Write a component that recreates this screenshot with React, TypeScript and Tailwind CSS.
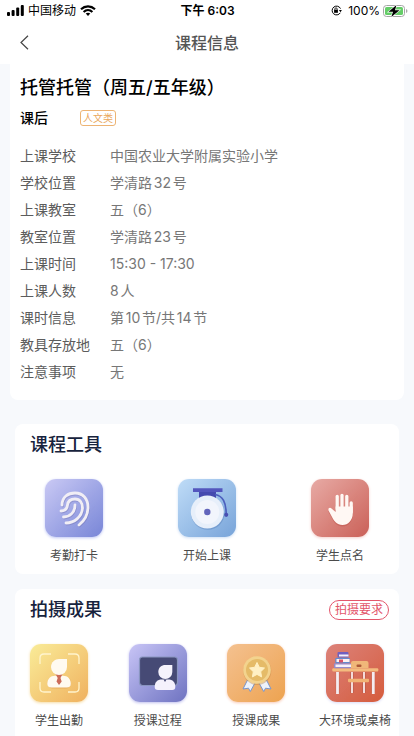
import type { ReactNode } from "react";

const details = [
  ["上课学校", "中国农业大学附属实验小学"],
  ["学校位置", "学清路32号"],
  ["上课教室", "五（6）"],
  ["教室位置", "学清路23号"],
  ["上课时间", "15:30 - 17:30"],
  ["上课人数", "8人"],
  ["课时信息", "第10节/共14节"],
  ["教具存放地", "五（6）"],
  ["注意事项", "无"],
];

function StatusBar() {
  return (
    <div className="grid h-[21px] grid-cols-[1fr_auto_1fr] items-center pr-[6px] pl-[7px] text-xs text-black">
      <div className="flex items-center gap-1">
        <svg width="17" height="11" viewBox="0 0 17 11" aria-hidden="true">
          <rect x="0" y="7" width="3" height="4" rx="1" />
          <rect x="4.6" y="5" width="3" height="6" rx="1" />
          <rect x="9.2" y="2.6" width="3" height="8.4" rx="1" />
          <rect x="13.8" y="0" width="3" height="11" rx="1" />
        </svg>
        <span>中国移动</span>
        <svg width="16" height="11" viewBox="0 0 16 11" fill="none" stroke="black" strokeWidth="2.2" aria-hidden="true">
          <path d="M1 4.2C5 .4 11 .4 15 4.2" />
          <path d="M3.6 7C6.2 4.6 9.8 4.6 12.4 7" />
          <path d="M5.7 8.6C7 7.4 9 7.4 10.3 8.6L8 11Z" fill="black" stroke="none" />
        </svg>
      </div>
      <div className="font-semibold">下午 6:03</div>
      <div className="flex items-center justify-end gap-[3px]">
        <svg className="mr-[3px]" width="11" height="11" viewBox="0 0 11 11" fill="none" stroke="black" aria-hidden="true">
          <path d="M9.3 7.8A4.4 4.4 0 1 1 9.5 3.6" strokeWidth="1" />
          <path d="M7.9 5h3L9.5 7.2Z" fill="black" stroke="none" />
          <rect x="3.1" y="4.8" width="3.8" height="3" fill="black" stroke="none" />
          <path d="M3.9 5V3.9a1.1 1.1 0 0 1 2.2 0V5" strokeWidth=".8" />
        </svg>
        <span>100%</span>
        <svg width="25" height="12" viewBox="0 0 25 12" aria-hidden="true">
          <rect x=".5" y=".5" width="21" height="11" rx="3" fill="white" stroke="#a5a5a5" />
          <rect x="2" y="2" width="18" height="8" rx="1.6" fill="#65cd68" />
          <path d="M23 4v4q1.5-.6 1.5-2T23 4Z" fill="#aaa" />
          <path d="M13.500 0 5.500 6.800H10L8.300 12 16.500 5.200H12Z" fill="none" stroke="white" strokeWidth="1.200" />
          <path d="M13.500 0 5.500 6.800H10L8.300 12 16.500 5.200H12Z" fill="black" />
        </svg>
      </div>
    </div>
  );
}

function FingerprintArt() {
  return (
    <g fill="none" strokeLinecap="round" strokeWidth="2.8">
      <g stroke="#7776b4" opacity=".45" transform="translate(.6 1)">
        <path d="M17 26C17 18 23 14 30 14C38 14 43 20 43 28C43 36 39 42 34 46" />
        <path d="M16 32C20 32 22 30 22.5 26C23 22 26 20 30 20C35 20 37.500 24 37.500 29C37 38 29 44 21 44" />
        <path d="M18.500 38C25 38 30 33 30 26" />
      </g>
      <g stroke="#f1eef5">
        <path d="M17 26C17 18 23 14 30 14C38 14 43 20 43 28C43 36 39 42 34 46" />
        <path d="M16 32C20 32 22 30 22.500 26C23 22 26 20 30 20C35 20 37.500 24 37.500 29C37 38 29 44 21 44" />
        <path d="M18.500 38C25 38 30 33 30 26" />
      </g>
    </g>
  );
}

function BellArt() {
  return (
    <>
      <path d="M21 12h17v8H21z" fill="#454aaf" />
      <path d="M15 9.300h29.500v3.600H15z" fill="#5356bd" />
      <path d="M37 15.500C45 17 48 23 48.200 35" fill="none" stroke="#4c5fbd" strokeWidth="1.700" />
      <circle cx="48.200" cy="35.800" r="2.100" fill="#484fb2" />
      <circle cx="29.800" cy="34" r="16.800" fill="#5c83bd" opacity=".45" />
      <circle cx="29.300" cy="33" r="16.500" fill="#e7effa" />
      <circle cx="29.300" cy="33" r="12" fill="#f2f5fc" />
      <circle cx="29.300" cy="33" r="3.200" fill="#6265bb" />
    </>
  );
}

function HandShape() {
  return (
    <>
      <path d="M26.200 30V17.500M31 30V16.300M35.800 30V17.500M40.200 33V24" fill="none" strokeWidth="3.300" strokeLinecap="round" />
      <path d="M24.600 27.500H41.800V34C41.800 41.500 37 46 31.500 46C26 46 23 42 21 38L17.500 31.500C16.800 29.400 18.800 27.800 20.500 29.500L24.600 33Z" stroke="none" />
    </>
  );
}

function HandArt() {
  return (
    <>
      <g fill="#b4483f" stroke="#b4483f" opacity=".35" transform="translate(0 1.500)"><HandShape /></g>
      <g fill="#fff8f4" stroke="#fff8f4"><HandShape /></g>
    </>
  );
}

function AttendanceArt() {
  return (
    <>
      <path d="M10 20V14q0-4 4-4h7M38 10h7q4 0 4 4v6M49 38v6q0 4-4 4h-7M21 48h-7q-4 0-4-4v-6" fill="none" stroke="#fff4cd" strokeWidth="1.300" />
      <rect x="17.500" y="33" width="23.500" height="11.500" rx="5.500" fill="#d99042" opacity=".45" />
      <path d="M25 31.800h8c5 0 7.800 3.500 7.800 8 0 2.500-1.300 3.700-4 3.700H21.500c-3 0-4.200-1.400-4.200-3.700 0-4.500 3-8 7.700-8Z" fill="#fffaf0" />
      <path d="M25.500 30h7l-2 4 1.200 3.500L29 41l-2.500-3.500 1.200-3.500Z" fill="#cc6b58" />
      <path d="M37 15v8a8 8 0 1 1-16 0c0-5 4-8 8-8Z" fill="#fffaf0" />
    </>
  );
}

function TeachingArt() {
  return (
    <>
      <rect x="10.500" y="13" width="38" height="28.500" rx="3" fill="#464a75" stroke="#8995c0" strokeWidth="1.200" />
      <path d="M33 35.500h6c4.800 0 7.300 2.600 7.300 7.500 0 2-1 3-3 3H29c-2.300 0-3.300-1-3.300-3 0-4.900 2.500-7.500 7.300-7.500Z" fill="#f4f1fc" />
      <path d="m34.500 35.500 1.500 2.500 1.500-2.500Z" fill="#464a75" />
      <path d="M43.300 21v7a7 7 0 1 1-14 0c0-4.500 3.300-7 7-7Z" fill="#f5f3fc" />
    </>
  );
}

function MedalArt() {
  return (
    <>
      <g fill="#eef3fb" stroke="#7795cc" strokeWidth="1">
        <path d="m20.500 36-4.500 9 5.500-.8 1.800 3.300 5-9Z" />
        <path d="m39.500 36 4.500 9-5.500-.8-1.800 3.300-5-9Z" />
      </g>
      <circle cx="30.300" cy="27" r="14" fill="#bd803c" opacity=".4" />
      <circle cx="30" cy="26" r="13.800" fill="#f3d38e" />
      <circle cx="30" cy="26" r="11" fill="#e5bb68" />
      <path d="m30 18.500 2.300 4.800 5.200.7-3.800 3.700.9 5.200-4.600-2.500-4.600 2.500.9-5.200-3.800-3.700 5.200-.7Z" fill="#fff0c4" stroke="#fff0c4" strokeWidth="1" strokeLinejoin="round" />
    </>
  );
}

function DeskArt() {
  return (
    <>
      <path d="M11.500 28v21M26 28v21M38 28v21M47.300 28v21" stroke="#9b4a40" strokeWidth="3.600" opacity=".4" />
      <path d="M11.500 28v22M47.300 28v22" stroke="#f4edf1" strokeWidth="2.800" />
      <path d="M26 28v21M38 28v21" stroke="#f4dcda" strokeWidth="2" />
      <path d="M25 24v-5q0-2 2-2h13.500q2 0 2 2v5Z" fill="#f0b779" />
      <rect x="30.500" y="20.500" width="5" height="2.600" rx="1" fill="#ac5938" />
      <rect x="6.300" y="24.300" width="46" height="3.300" rx="1" fill="#f4bb7e" />
      <rect x="22" y="34.800" width="21" height="3.500" rx="1" fill="#f1b274" />
      <rect x="11.500" y="8" width="11" height="5.500" rx="1" fill="#7060bf" />
      <path d="M13 10.500h9.500v2H13z" fill="#f7f2f9" />
      <rect x="9.300" y="13.700" width="14.500" height="5.500" rx="1" fill="#628bd0" />
      <path d="M10.500 15h13v3h-13z" fill="#fff0ef" />
      <path d="M13 15.500h4v3h-4z" fill="#da5266" />
      <rect x="8" y="19.300" width="17" height="5" rx="1" fill="#968ccc" />
      <path d="M9.500 20.500h15.500v2.500H9.500z" fill="#f7f1fa" />
    </>
  );
}

function Tile({ label, color, children }: { label: string; color: string; children: ReactNode }) {
  return (
    <button type="button" className="flex w-[58px] flex-col items-center gap-[10px]">
      <span className={`size-[58px] overflow-hidden rounded-[11px] bg-linear-to-br ${color}`}>
        <svg className="size-full" viewBox="0 0 58 58" aria-hidden="true">{children}</svg>
      </span>
      <span className="text-xs leading-[18px] whitespace-nowrap text-[#4b4b4b]">{label}</span>
    </button>
  );
}

export default function App() {
  return (
    <div
      lang="zh-CN"
      className="flex min-h-screen flex-col bg-[#f7f9fc] font-['Inter','Noto_Sans_CJK_SC',sans-serif] [text-autospace:normal]"
    >
      <header className="bg-white">
        <StatusBar />
        <div className="grid h-[43px] grid-cols-[1fr_auto_1fr] items-center px-5">
          <button type="button" aria-label="返回">
            <svg width="9" height="15" viewBox="0 0 9 15" fill="none" stroke="#444" strokeWidth="1.2" aria-hidden="true">
              <path d="M8 .8 1 7.500l7 6.700" />
            </svg>
          </button>
          <h1 className="text-base font-medium text-[#555]">课程信息</h1>
        </div>
      </header>

      <main className="flex grow flex-col">
        <section className="mx-[10px] rounded-b-lg bg-white px-[10px] pt-3 pb-[15px]">
          <h2 className="text-lg leading-6 font-medium text-black">托管托管（周五/五年级）</h2>
          <div className="mt-[6px] flex h-6 items-center">
            <span className="w-[60px] text-sm font-medium text-black">课后</span>
            <span className="rounded-[3px] border border-[#edb474] px-[2px] text-[10px] leading-[14px] text-[#eaa75c]">人文类</span>
          </div>
          <dl className="mt-3 grid grid-cols-[90px_1fr] text-sm leading-[27px] text-[#777]">
            {details.map(([name, value]) => (
              <div key={name} className="contents">
                <dt className="text-[#5c5c5c]">{name}</dt>
                <dd>{value}</dd>
              </div>
            ))}
          </dl>
        </section>

        <section className="mx-[15px] mt-6 rounded-lg bg-white px-[15px] pt-[9px] pb-[9px]">
          <h2 className="text-lg leading-6 font-medium text-[#17233d]">课程工具</h2>
          <div className="mt-[22px] flex justify-between px-[15px]">
            <Tile label="考勤打卡" color="from-[#cac9f4] to-[#7986d7] shadow-[0_1px_3px_#bec6f5]"><FingerprintArt /></Tile>
            <Tile label="开始上课" color="from-[#bfdcf7] to-[#78a4d9] shadow-[0_1px_3px_#cddff5]"><BellArt /></Tile>
            <Tile label="学生点名" color="from-[#e7aaa5] to-[#ca6058] shadow-[0_1px_3px_#f4ceca]"><HandArt /></Tile>
          </div>
        </section>

        <section className="mx-[15px] mt-[15px] grow rounded-t-lg bg-white px-[15px] pt-[9px]">
          <div className="flex h-6 items-center justify-between">
            <h2 className="text-lg leading-6 font-medium text-[#17233d]">拍摄成果</h2>
            <button type="button" className="-mr-[5px] rounded-full border border-[#e3566b] px-[5px] text-xs leading-[18px] text-[#e3566b]">拍摄要求</button>
          </div>
          <div className="mt-[22px] flex justify-between">
            <Tile label="学生出勤" color="from-[#f9ec98] to-[#efb15f] shadow-[0_1px_3px_#f6dda6]"><AttendanceArt /></Tile>
            <Tile label="授课过程" color="from-[#c9c5f6] to-[#6f73c1] shadow-[0_1px_3px_#c0c0ee]"><TeachingArt /></Tile>
            <Tile label="授课成果" color="from-[#f4c18f] to-[#eda34f] shadow-[0_1px_3px_#f8c9b5]"><MedalArt /></Tile>
            <Tile label="大环境或桌椅" color="from-[#dc827a] to-[#d55c3c] shadow-[0_1px_3px_#d9daf5]"><DeskArt /></Tile>
          </div>
        </section>
      </main>
    </div>
  );
}
